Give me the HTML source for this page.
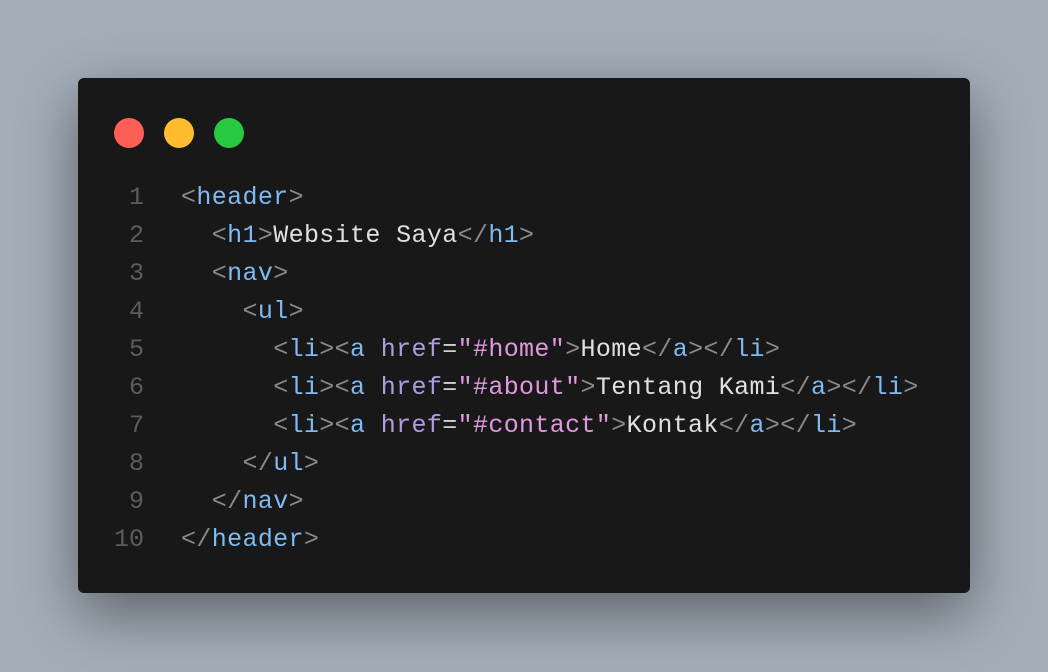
<!DOCTYPE html>
<html><head><meta charset="utf-8"><style>
html,body{margin:0;width:1048px;height:672px;overflow:hidden;background:#a4aeb9;}
.card{position:absolute;left:78px;top:78px;width:892px;height:515px;background:#181818;border-radius:6px;box-shadow:0 20px 60px rgba(0,0,0,0.45);}
.dot{position:absolute;top:40px;width:30px;height:30px;border-radius:50%;}
.code{position:absolute;left:0;top:101px;font-family:"Liberation Mono",monospace;font-size:25px;letter-spacing:0.36px;line-height:38px;white-space:pre;color:#e0e0e0;}
.ln{display:inline-block;width:66px;text-align:right;color:#5c5c5c;margin-right:37px;letter-spacing:0;}
.p{color:#8a8a8a}.t{color:#7fbaf2}.a{color:#b19be0}.s{color:#e099dc}.e{color:#d0d0d0}
</style></head><body>
<div class="card">
<div class="dot" style="left:36px;background:#ff5f57"></div>
<div class="dot" style="left:86px;background:#febc2e"></div>
<div class="dot" style="left:136px;background:#28c840"></div>
<div class="code"><span class="ln">1</span><span class="p">&lt;</span><span class="t">header</span><span class="p">&gt;</span>
<span class="ln">2</span>  <span class="p">&lt;</span><span class="t">h1</span><span class="p">&gt;</span>Website Saya<span class="p">&lt;/</span><span class="t">h1</span><span class="p">&gt;</span>
<span class="ln">3</span>  <span class="p">&lt;</span><span class="t">nav</span><span class="p">&gt;</span>
<span class="ln">4</span>    <span class="p">&lt;</span><span class="t">ul</span><span class="p">&gt;</span>
<span class="ln">5</span>      <span class="p">&lt;</span><span class="t">li</span><span class="p">&gt;&lt;</span><span class="t">a</span> <span class="a">href</span><span class="e">=</span><span class="s">"#home"</span><span class="p">&gt;</span>Home<span class="p">&lt;/</span><span class="t">a</span><span class="p">&gt;&lt;/</span><span class="t">li</span><span class="p">&gt;</span>
<span class="ln">6</span>      <span class="p">&lt;</span><span class="t">li</span><span class="p">&gt;&lt;</span><span class="t">a</span> <span class="a">href</span><span class="e">=</span><span class="s">"#about"</span><span class="p">&gt;</span>Tentang Kami<span class="p">&lt;/</span><span class="t">a</span><span class="p">&gt;&lt;/</span><span class="t">li</span><span class="p">&gt;</span>
<span class="ln">7</span>      <span class="p">&lt;</span><span class="t">li</span><span class="p">&gt;&lt;</span><span class="t">a</span> <span class="a">href</span><span class="e">=</span><span class="s">"#contact"</span><span class="p">&gt;</span>Kontak<span class="p">&lt;/</span><span class="t">a</span><span class="p">&gt;&lt;/</span><span class="t">li</span><span class="p">&gt;</span>
<span class="ln">8</span>    <span class="p">&lt;/</span><span class="t">ul</span><span class="p">&gt;</span>
<span class="ln">9</span>  <span class="p">&lt;/</span><span class="t">nav</span><span class="p">&gt;</span>
<span class="ln">10</span><span class="p">&lt;/</span><span class="t">header</span><span class="p">&gt;</span></div>
</div>
</body></html>
